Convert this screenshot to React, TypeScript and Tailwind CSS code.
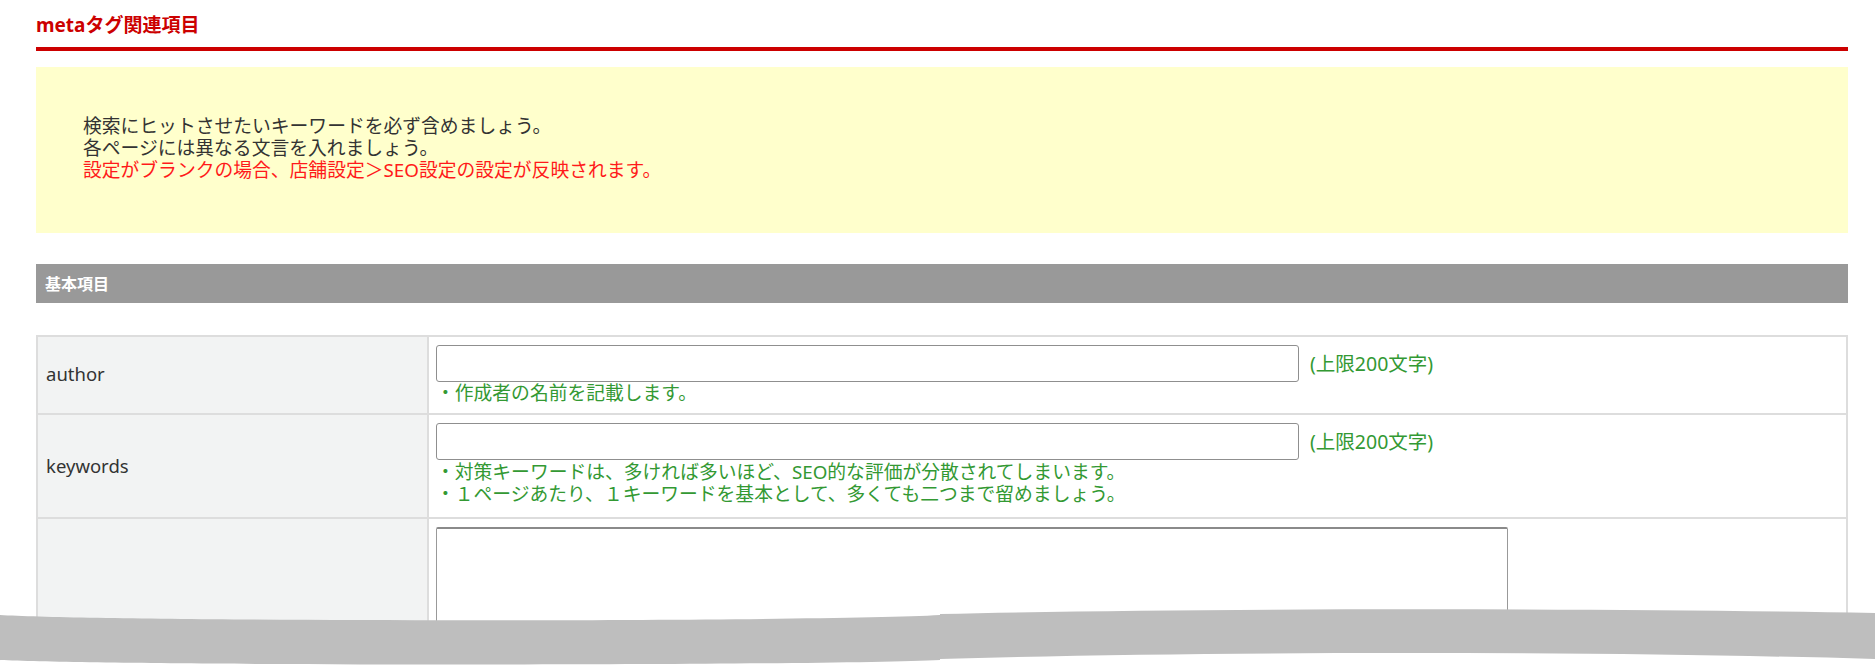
import React from "react";

const font = { fontFamily: '"Noto Sans", "Noto Sans CJK JP", sans-serif' };

function Limit() {
  return <span className="ml-[11px] text-[19.5px] leading-[22px] text-[#339933]">(上限200文字)</span>;
}

export default function App() {
  return (
    <div className="relative h-[665px] overflow-hidden bg-white pl-[36px] pr-[27px] text-[#333333]" style={font}>
      <div className="border-b-4 border-[#cc0000] pt-[13px] pb-[10px]">
        <h2 className="text-[19px] font-bold leading-[24px] text-[#cc0000]">metaタグ関連項目</h2>
      </div>

      <div className="mt-[16px] h-[166px] bg-[#ffffcc] pl-[47px] pt-[48px] text-[18.8px] leading-[22px]">
        <p>検索にヒットさせたいキーワードを必ず含めましょう。</p>
        <p>各ページには異なる文言を入れましょう。</p>
        <p className="text-[#ff1a1a]">設定がブランクの場合、店舗設定＞SEO設定の設定が反映されます。</p>
      </div>

      <div className="mt-[31px] flex h-[39px] items-center bg-[#999999] pl-[9px]">
        <span className="text-[16px] font-bold text-white">基本項目</span>
      </div>

      <div className="mt-[32px] border-x-2 border-t-2 border-[#dddddd] text-[18.5px]">
        <div className="flex border-b-2 border-[#dddddd]">
          <div className="flex w-[391px] shrink-0 items-center border-r-2 border-[#dddddd] bg-[#f2f3f3] pl-[8px] pb-[2px]">author</div>
          <div className="flex-1 pl-[7px] pt-[8px] pb-[9px]">
            <div className="flex items-center">
              <input className="h-[37px] w-[863px] rounded-[3px] border border-[#8f8f8f] bg-white" />
              <Limit />
            </div>
            <p className="text-[18.8px] leading-[22px] text-[#339933]">・作成者の名前を記載します。</p>
          </div>
        </div>

        <div className="flex border-b-2 border-[#dddddd]">
          <div className="flex w-[391px] shrink-0 items-center border-r-2 border-[#dddddd] bg-[#f2f3f3] pl-[8px]">keywords</div>
          <div className="flex-1 pl-[7px] pt-[8px] pb-[12px]">
            <div className="flex items-center">
              <input className="h-[37px] w-[863px] rounded-[3px] border border-[#8f8f8f] bg-white" />
              <Limit />
            </div>
            <div className="pt-[1px] text-[18.8px] leading-[22px] text-[#339933]">
              <p>・対策キーワードは、多ければ多いほど、SEO的な評価が分散されてしまいます。</p>
              <p>・１ページあたり、１キーワードを基本として、多くても二つまで留めましょう。</p>
            </div>
          </div>
        </div>

        <div className="flex border-b-2 border-[#dddddd]">
          <div className="w-[391px] shrink-0 border-r-2 border-[#dddddd] bg-[#f2f3f3]"></div>
          <div className="flex-1 pl-[7px] pt-[8px] pb-[10px]">
            <textarea className="block h-[180px] w-[1072px] resize-none rounded-[2px] border border-[#999999] border-t-2 border-t-[#8a8a8a] bg-white" />
          </div>
        </div>
      </div>

      <svg
        className="absolute left-0 top-[600px]"
        width="1875"
        height="65"
        viewBox="0 0 1875 65"
        preserveAspectRatio="none"
      >
        <rect x="0" y="35" width="1875" height="30" fill="#ffffff" />
        <path
          d="M0,15 C120,22 820,22 940,15 L940,14 C1200,8 1600,8 1875,13 L1875,59 C1600,51 1200,51 940,59 L940,60 C820,66 120,66 0,60 Z"
          fill="#bebebe"
        />
      </svg>
    </div>
  );
}
